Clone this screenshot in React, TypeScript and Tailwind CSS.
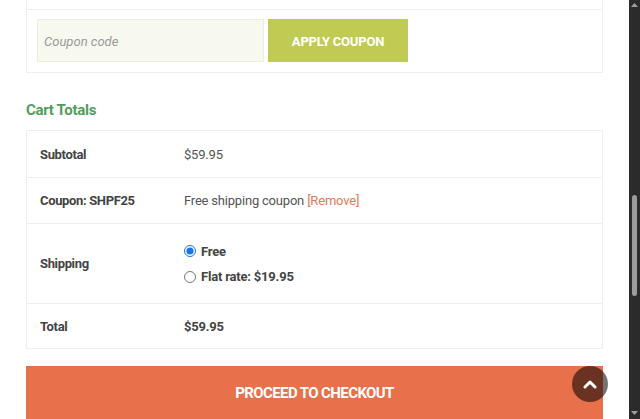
import React from "react";

const body = { fontFamily: 'Roboto, "Liberation Sans", Arial, sans-serif' };
const head = { fontFamily: 'Roboto, "Liberation Sans", sans-serif' };

function Row({ label, children, h }: { label: string; children: React.ReactNode; h: string }) {
  return (
    <div className={`flex items-center border-t border-[#efefef] first:border-t-0 ${h}`}>
      <div className="w-[157px] shrink-0 pl-[13px] text-[13px] font-bold tracking-[-0.35px] text-[#444]">{label}</div>
      <div className="text-[13px] tracking-[-0.2px] text-[#555]">{children}</div>
    </div>
  );
}

export default function App() {
  return (
    <div className="flex h-[419px] w-[640px] overflow-hidden bg-white" style={body}>
      <div className="relative flex-1">
        <div className="mx-[26px] -mt-px">
          {/* coupon card */}
          <div className="border-x border-b border-[#efefef]">
            <div className="h-[11px] border-b border-[#efefef]" />
            <div className="flex gap-[4px] px-[10px] pb-[10px] pt-[9px]">
              <div className="flex h-[43px] w-[227px] items-center border border-[#ececdf] bg-[#f7f8ee] pl-[6px] pt-[2px] text-[13px] italic text-[#9a9a9a]" style={head}>
                Coupon code
              </div>
              <div className="flex h-[43px] w-[140px] items-center justify-center bg-[#bfcb52] pt-[2px] text-[13px] font-bold tracking-[-0.2px] text-white" style={head}>
                APPLY COUPON
              </div>
            </div>
          </div>

          <h2 className="mt-[27px] text-[15px] font-bold leading-[20px] tracking-[-0.3px] text-[#4f9d5d]" style={head}>
            Cart Totals
          </h2>

          {/* totals table */}
          <div className="mt-[10px] border border-[#efefef]">
            <Row label="Subtotal" h="h-[46px] pt-[1px]">$59.95</Row>
            <Row label="Coupon: SHPF25" h="h-[46px]">
              Free shipping coupon <span className="text-[#e07a5a]">[Remove]</span>
            </Row>
            <Row label="Shipping" h="h-[80px]">
              <div className="flex flex-col gap-[6px] pt-[1px]">
                <label className="flex items-center gap-[5px] font-bold text-[#444]">
                  <input type="radio" name="ship" defaultChecked className="m-0 h-[12px] w-[12px] accent-[#1a73e8]" />
                  Free
                </label>
                <label className="flex items-center gap-[5px] font-bold text-[#444]">
                  <input type="radio" name="ship" className="m-0 h-[12px] w-[12px]" />
                  Flat rate: $19.95
                </label>
              </div>
            </Row>
            <Row label="Total" h="h-[45px] pt-[1px]">
              <span className="font-bold text-[#444]">$59.95</span>
            </Row>
          </div>

          <div className="mt-[17px] flex h-[56px] items-start justify-center bg-[#e8704b] pt-[16px] text-[15px] font-bold tracking-[-0.6px] text-white" style={head}>
            PROCEED TO CHECKOUT
          </div>
        </div>

        {/* back to top */}
        <div className="absolute left-[572px] top-[366px] flex h-[36px] w-[36px] items-center justify-center rounded-full bg-black/55">
          <svg width="14" height="10" viewBox="0 0 14 10">
            <path d="M2 8 L7 3 L12 8" fill="none" stroke="white" strokeWidth="3" strokeLinecap="round" strokeLinejoin="round" />
          </svg>
        </div>
      </div>

      {/* scrollbar */}
      <div className="relative w-[11px] bg-[#2b2b2b]">
        <svg className="absolute left-[2px] top-[3px]" width="7" height="5" viewBox="0 0 7 5">
          <path d="M3.5 0 L7 4 L0 4 Z" fill="#a0a0a0" />
        </svg>
        <div className="absolute left-[3px] top-[195px] h-[101px] w-[5px] rounded-full bg-[#9c9c9c]" />
        <svg className="absolute left-[2px] top-[411px]" width="7" height="5" viewBox="0 0 7 5">
          <path d="M0 0 L7 0 L3.5 4 Z" fill="#a0a0a0" />
        </svg>
      </div>
    </div>
  );
}
